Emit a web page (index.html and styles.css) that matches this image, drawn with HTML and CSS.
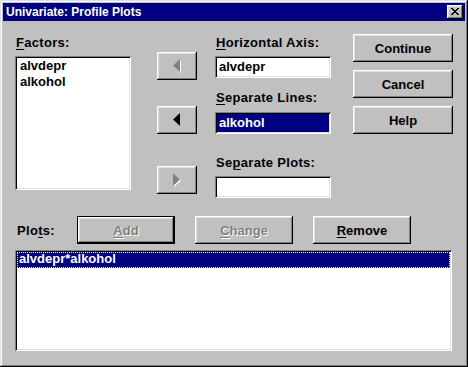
FILE: index.html
```html
<!DOCTYPE html>
<html>
<head>
<meta charset="utf-8">
<link rel="stylesheet" href="styles.css">
</head>
<body>
<div class="window">
  <div class="titlebar">
    <span class="title">Univariate: Profile Plots</span>
    <span class="close"><svg width="8" height="7" viewBox="0 0 8 7"><path d="M0 0h2v1h1v1h2v-1h1v-1h2v1h-1v1h-1v1h-1v1h1v1h1v1h1v1h-2v-1h-1v-1h-2v1h-1v1h-2v-1h1v-1h1v-1h1v-1h-1v-1h-1v-1h-1z" fill="#000"/></svg></span>
  </div>
  <div class="content">
    <div class="top">
      <div class="col col-factors">
        <div class="label"><u>F</u>actors:</div>
        <div class="listbox factors">
          <div class="item">alvdepr</div>
          <div class="item">alkohol</div>
        </div>
      </div>
      <div class="col col-arrows">
        <div class="btn arrow a1"><svg width="9" height="15" viewBox="0 0 9 15"><polygon points="1,7.5 8,1 8,14" fill="#fff"/><polygon points="0,6.5 7,0 7,13" fill="#808080"/></svg></div>
        <div class="btn arrow a2"><svg width="9" height="15" viewBox="0 0 9 15"><polygon points="0,6.5 7,0 7,13" fill="#000"/></svg></div>
        <div class="btn arrow a3"><svg width="9" height="15" viewBox="0 0 9 15"><polygon points="1,1 8,7.5 1,14" fill="#fff"/><polygon points="0,0 7,6.5 0,13" fill="#808080"/></svg></div>
      </div>
      <div class="col col-fields">
        <div class="label l1"><u>H</u>orizontal Axis:</div>
        <div class="field f1">alvdepr</div>
        <div class="label l2"><u>S</u>eparate Lines:</div>
        <div class="field f2 selected">alkohol</div>
        <div class="label l3">Se<u>p</u>arate Plots:</div>
        <div class="field f3"></div>
      </div>
      <div class="col col-buttons">
        <div class="btn wide">Continue</div>
        <div class="btn wide">Cancel</div>
        <div class="btn wide">Help</div>
      </div>
    </div>
    <div class="plots-row">
      <div class="plots-label">Plo<u>t</u>s:</div>
      <div class="btn pbtn default disabled"><u>A</u>dd</div>
      <div class="btn pbtn disabled"><u>C</u>hange</div>
      <div class="btn pbtn"><u>R</u>emove</div>
    </div>
    <div class="listbox plots">
      <div class="item sel">alvdepr*alkohol</div>
    </div>
  </div>
</div>
</body>
</html>
```

FILE: styles.css
```css
html, body {
  margin: 0;
  padding: 0;
}
body {
  width: 468px;
  height: 367px;
  overflow: hidden;
  font-family: "Liberation Sans", Arial, sans-serif;
  font-weight: bold;
  font-size: 13px;
  color: #000;
}
.window {
  width: 468px;
  height: 367px;
  box-sizing: border-box;
  padding: 3px;
  background: #c0c0c0;
  box-shadow: inset -1px -1px 0 #000, inset 1px 1px 0 #dfdfdf, inset -2px -2px 0 #808080, inset 2px 2px 0 #fff;
}
.titlebar {
  height: 18px;
  background: #000080;
  display: flex;
  align-items: center;
  justify-content: space-between;
  padding: 0 2px 0 3px;
}
.title {
  color: #fff;
  font-size: 12px;
  line-height: 18px;
}
.close {
  width: 16px;
  height: 14px;
  background: #c0c0c0;
  box-shadow: inset -1px -1px 0 #000, inset 1px 1px 0 #fff, inset -2px -2px 0 #808080, inset 2px 2px 0 #dfdfdf;
  display: flex;
  align-items: center;
  justify-content: center;
  padding-bottom: 1px;
  box-sizing: border-box;
}
.content {
  padding: 13px 0 0 12px;
}
.top {
  display: flex;
  height: 164px;
}
.col {
  display: flex;
  flex-direction: column;
}
.label {
  line-height: 16px;
  white-space: nowrap;
  letter-spacing: 0.3px;
}
u {
  text-decoration: underline;
  text-decoration-thickness: 1px;
  text-underline-offset: 2px;
}
.col-factors {
  width: 116px;
}
.col-factors .label {
  margin-top: 1px;
  padding-left: 1px;
}
.listbox {
  background: #fff;
  box-sizing: border-box;
  padding: 2px;
  box-shadow: inset 1px 1px 0 #808080, inset -1px -1px 0 #fff, inset 2px 2px 0 #000, inset -2px -2px 0 #dfdfdf;
}
.factors {
  margin-top: 5px;
  height: 134px;
}
.item {
  line-height: 16px;
  padding-left: 3px;
  white-space: nowrap;
}
.col-arrows {
  width: 40px;
  margin-left: 26px;
  padding-top: 18px;
}
.btn {
  box-sizing: border-box;
  background: #c0c0c0;
  box-shadow: inset -1px -1px 0 #000, inset 1px 1px 0 #fff, inset -2px -2px 0 #808080, inset 2px 2px 0 #dfdfdf;
  display: flex;
  align-items: center;
  justify-content: center;
  white-space: nowrap;
}
.arrow {
  width: 40px;
  height: 28px;
}
.arrow svg {
  margin-left: 1px;
}
.a2 {
  margin-top: 26px;
}
.a3 {
  margin-top: 32px;
}
.col-fields {
  width: 116px;
  margin-left: 18px;
}
.col-fields .label {
  padding-left: 1px;
}
.l1 {
  margin-top: 1px;
}
.l2 {
  margin-top: 12px;
}
.l3 {
  margin-top: 21px;
}
.field {
  height: 22px;
  box-sizing: border-box;
  background: #fff;
  padding: 2px 4px;
  line-height: 18px;
  box-shadow: inset 1px 1px 0 #808080, inset -1px -1px 0 #fff, inset 2px 2px 0 #000, inset -2px -2px 0 #dfdfdf;
}
.f1 {
  margin-top: 5px;
}
.f2 {
  margin-top: 6px;
}
.f3 {
  margin-top: 5px;
}
.field.selected {
  background: #000080;
  color: #fff;
}
.col-buttons {
  margin-left: 22px;
  gap: 8px;
}
.wide {
  width: 100px;
  height: 28px;
}
.plots-row {
  display: flex;
  align-items: center;
  margin-top: 18px;
  height: 28px;
}
.plots-label {
  width: 60px;
  padding-left: 2px;
  letter-spacing: 0.3px;
}
.pbtn {
  width: 98px;
  height: 28px;
  margin-right: 20px;
}
.pbtn.default {
  box-shadow: inset 0 0 0 1px #000, inset -2px -2px 0 #000, inset 2px 2px 0 #fff, inset -3px -3px 0 #808080, inset 3px 3px 0 #dfdfdf;
}
.disabled {
  color: #808080;
  text-shadow: 1px 1px 0 #fff;
}
.plots {
  margin-top: 6px;
  width: 437px;
  height: 101px;
}
.sel {
  background: #000080;
  color: #fff;
  height: 16px;
  box-sizing: border-box;
  line-height: 14px;
  padding-left: 2px;
  outline: 1px dotted #ffff80;
  outline-offset: -1px;
}
```
